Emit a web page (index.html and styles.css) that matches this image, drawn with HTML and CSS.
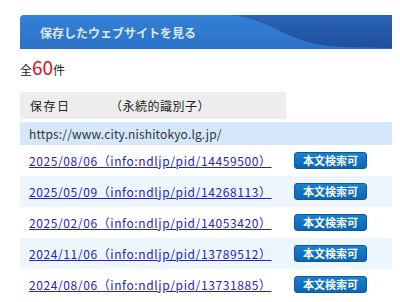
FILE: index.html
```html
<!DOCTYPE html>
<html lang="ja">
<head>
    <meta charset="UTF-8">
    <meta name="viewport" content="width=device-width, initial-scale=1.0">
    <link rel="stylesheet" href="styles.css">
    <title>保存したウェブサイトを見る</title>
</head>
<body>
    <div class="container">
        <h2 class="title-bar">
            <span>保存したウェブサイトを見る</span>
            <svg class="swoosh" viewBox="0 0 200 34" preserveAspectRatio="none">
                <defs>
                    <linearGradient id="sw" x1="0" y1="0" x2="0" y2="1">
                        <stop offset="0" stop-color="#2a63b6"/>
                        <stop offset="1" stop-color="#1e4f9c"/>
                    </linearGradient>
                </defs>
                <path d="M40 0 C80 4 95 30 150 32 L200 33 L200 0 Z" fill="url(#sw)"/>
            </svg>
        </h2>

        <p class="count">全<span class="count-num">60</span>件</p>

        <div class="list-head">
            <span class="col-date">保存日</span>
            <span class="col-id">（永続的識別子）</span>
        </div>

        <div class="site-url">https://www.city.nishitokyo.lg.jp/</div>

        <ul class="save-list">
            <li>
                <a href="#">2025/08/06（info:ndljp/pid/14459500）</a>
                <span class="badge">本文検索可</span>
            </li>
            <li class="alt">
                <a href="#">2025/05/09（info:ndljp/pid/14268113）</a>
                <span class="badge">本文検索可</span>
            </li>
            <li>
                <a href="#">2025/02/06（info:ndljp/pid/14053420）</a>
                <span class="badge">本文検索可</span>
            </li>
            <li class="alt">
                <a href="#">2024/11/06（info:ndljp/pid/13789512）</a>
                <span class="badge">本文検索可</span>
            </li>
            <li>
                <a href="#">2024/08/06（info:ndljp/pid/13731885）</a>
                <span class="badge">本文検索可</span>
            </li>
        </ul>
    </div>
</body>
</html>
```

FILE: styles.css
```css
body {
    margin: 0;
    padding: 0;
    background-color: #fff;
    font-family: "Noto Sans CJK JP", "Noto Sans", sans-serif;
    color: #222;
}

.container {
    width: 372px;
    margin: 15px 0 0 20px;
}

.title-bar {
    position: relative;
    height: 34px;
    margin: 0;
    padding-left: 20px;
    display: flex;
    align-items: center;
    background: linear-gradient(#3481d6, #2a72c8);
    border-radius: 4px 0 0 0;
    color: #dfe7f3;
    font-size: 12px;
    font-weight: bold;
    overflow: hidden;
}

.title-bar span {
    position: relative;
    z-index: 1;
}

.swoosh {
    position: absolute;
    right: 0;
    top: 0;
    width: 200px;
    height: 34px;
}

.count {
    margin: 7px 0 0;
    font-size: 12px;
    line-height: 22px;
}

.count-num {
    color: #e0101a;
    font-size: 19px;
}

.list-head {
    width: 266px;
    height: 27px;
    margin-top: 11px;
    display: flex;
    align-items: center;
    background-color: #ededed;
    font-size: 12px;
    color: #222;
}

.col-date {
    margin-left: 10px;
    width: 80px;
    letter-spacing: 1.5px;
}

.col-id {
    letter-spacing: 0.5px;
}

.site-url {
    margin-top: 3px;
    height: 23px;
    line-height: 23px;
    padding-left: 9px;
    background-color: #d5e8fb;
    font-size: 12px;
    letter-spacing: 0.15px;
    color: #333;
}

.save-list {
    list-style-type: none;
    margin: 0;
    padding: 0;
}

.save-list li {
    height: 31px;
    padding-left: 9px;
    display: flex;
    align-items: center;
}

.save-list li.alt {
    background-color: #eef6fd;
}

.save-list a {
    width: 265px;
    color: #2323c8;
    font-size: 12px;
    letter-spacing: 0.6px;
}

.badge {
    width: 73px;
    height: 17px;
    line-height: 15px;
    text-align: center;
    background: linear-gradient(#1a7fd0, #0a66b6);
    border: 1px solid #0b5aa0;
    border-radius: 3px;
    color: #fff;
    font-size: 11px;
    font-weight: bold;
    box-sizing: border-box;
}
```
